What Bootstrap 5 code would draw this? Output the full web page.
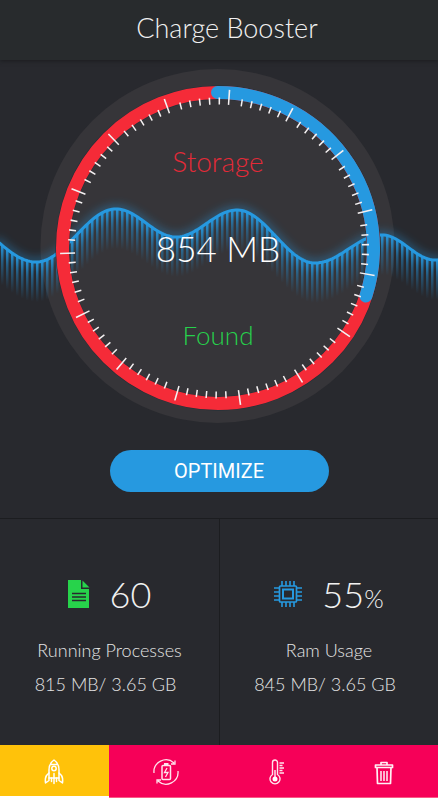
<!DOCTYPE html>
<html lang="en">
<head>
<meta charset="utf-8">
<meta name="viewport" content="width=device-width, initial-scale=1">
<title>Charge Booster</title>
<link rel="stylesheet" href="https://cdn.jsdelivr.net/npm/bootstrap@5.3.0/dist/css/bootstrap.min.css">
<style>
  body { background: #fff; font-family: Lato, "Open Sans", sans-serif; font-weight: 300; }
  .app { max-width: 600px; background: #28292e; color: #f1f1f1; }
  .topbar { background: #282b2d; height: 60px; box-shadow: 0 1px 4px #1b1c1f; }
  .topbar h1 { font-size: 27px; line-height: 36px; font-weight: 300; }
  .gauge text { text-anchor: middle; font-weight: 300; }
  .action { padding: 10px 0 26px; }
  .optimize { background: #2699e0; color: #fff; height: 42px; font: 400 20px/24px Roboto, sans-serif; }
  .optimize:hover { background: #1f88c9; color: #fff; }
  .stats { border-top: 1px solid #1c1d20; }
  .stat { padding: 53px 0 44px; }
  .stat + .stat { border-left: 1px solid #1c1d20; }
  .figure-row { gap: 20px; height: 44px; margin-bottom: 17px; }
  .amount { font-size: 36px; line-height: 44px; }
  .amount small { font-size: 25px; line-height: 1; }
  .stat p { font-size: 18px; line-height: 34px; color: #e4e4e4; }
  .stat p.used { padding-right: 8px; }
  .tabs { align-items: flex-start; }
  .tab { height: 53px; background: #f60058; border-radius: 0; border: 0; border-bottom: 1px solid #f95a86; padding: 2px 0 0; }
  .tab:hover { background: #e30051; }
  .tab.current, .tab.current:hover { background: #ffc20a; border-bottom: 2px solid #fff; }
</style>
<script src="https://cdn.jsdelivr.net/npm/bootstrap@5.3.0/dist/js/bootstrap.bundle.min.js"></script>
</head>
<body>
<div class="app mx-auto">
  <header class="topbar d-flex align-items-center justify-content-center position-relative">
    <h1 class="m-0 ps-3 pb-1">Charge Booster</h1>
  </header>

  <main>
    <svg class="gauge d-block w-100" viewBox="0 60 438 380" role="img" aria-label="854 MB of storage found">
      <defs>
        <linearGradient id="fade" x1="0" y1="0" x2="0" y2="1">
          <stop offset="0" stop-color="#2699e0" stop-opacity=".95"/>
          <stop offset=".45" stop-color="#2386c4" stop-opacity=".5"/>
          <stop offset="1" stop-color="#2386c4" stop-opacity="0"/>
        </linearGradient>
        <filter id="glow" x="-10%" y="-60%" width="120%" height="220%"><feGaussianBlur stdDeviation="5"/></filter>
      </defs>
      <circle cx="217.5" cy="246" r="177" fill="#363539"/>
      <path id="halo" fill="none" stroke="#2699e0" stroke-width="7" opacity=".45" filter="url(#glow)"/>
      <g id="bars" fill="url(#fade)"></g>
      <path id="wave" fill="none" stroke="#2699e0" stroke-width="3"/>
      <circle cx="218" cy="248" r="155.5" fill="none" stroke="#1d3038" stroke-width="14"/>
      <circle cx="218" cy="248" r="155.5" fill="none" stroke="#f52b38" stroke-width="13"/>
      <path d="M217.500 92.500A155.500 155.500 0 0 1 365.900 296" fill="none" stroke="#2699e0" stroke-width="13" stroke-linecap="round"/>
      <g fill="none" stroke="#f4f0f1">
        <circle cx="218.500" cy="248" r="151" stroke-width="15" pathLength="360" stroke-dasharray=".6 23.4" transform="rotate(-86.300 218.500 248)"/>
        <circle cx="218.500" cy="248" r="147" stroke-width="7" pathLength="360" stroke-dasharray=".6 3.2 .6 3.2 .6 3.2 .6 3.2 .6 8.2" transform="rotate(-81.200 218.500 248)"/>
      </g>
      <text x="218" y="172" font-size="28" fill="#e42a38">Storage</text>
      <text x="218" y="262" font-size="35" fill="#fff">854 MB</text>
      <text x="218" y="345" font-size="26" fill="#27d04c">Found</text>
    </svg>

    <div class="action d-flex justify-content-center">
      <button type="button" class="optimize btn rounded-pill w-50 border-0 p-0">OPTIMIZE</button>
    </div>

    <section class="stats row g-0 text-center">
      <div class="stat col-6">
        <div class="figure-row d-flex align-items-center justify-content-center">
          <svg width="22" height="28" viewBox="0 0 22 28" aria-hidden="true">
            <path fill="#27d34b" d="M0 0H13V9H21V28H0ZM14.500 0.500L21.500 7.500H14.500Z"/>
            <path stroke="#28292e" stroke-width="1.400" d="M4 13.500H18M4 17H18M4 20.500H18"/>
          </svg>
          <span class="amount">60</span>
        </div>
        <p class="m-0">Running Processes</p>
        <p class="used m-0">815 MB/ 3.65 GB</p>
      </div>
      <div class="stat col-6">
        <div class="figure-row d-flex align-items-center justify-content-center">
          <svg width="28" height="28" viewBox="0 0 28 28" fill="none" stroke="#2699e0" aria-hidden="true">
            <rect x="5.500" y="6" width="17" height="16" rx="1" stroke-width="1.700"/>
            <rect x="9" y="9.500" width="10" height="9" stroke-width="2"/>
            <path stroke-width="1.600" d="M8 6V1M12 6V1M16 6V1M20 6V1M8 27V22M12 27V22M16 27V22M20 27V22M0 8H5.500M0 12H5.500M0 16H5.500M0 20H5.500M22.500 8H28M22.500 12H28M22.500 16H28M22.500 20H28"/>
          </svg>
          <span class="amount">55<small>%</small></span>
        </div>
        <p class="m-0">Ram Usage</p>
        <p class="used m-0">845 MB/ 3.65 GB</p>
      </div>
    </section>
  </main>

  <nav class="tabs d-flex" aria-label="Tools">
    <button type="button" class="tab current btn flex-fill" aria-label="Boost">
      <svg width="20" height="26" viewBox="0 0 20 26" fill="none" stroke="#fff" stroke-width="1.500" stroke-linejoin="round" stroke-linecap="round">
        <path d="M10 1C6.500 3.500 5 7 5 11V19H15V11C15 7 13.500 3.500 10 1Z"/>
        <path d="M7 5.500H13"/>
        <circle cx="10" cy="9.500" r="2.200"/>
        <path d="M5 14L2.500 16.500C1.500 18 1 20 1.500 24L5 21.500V19M15 14L17.500 16.500C18.500 18 19 20 18.500 24L15 21.500V19M10 14.500V24.500M7.500 19V22.500M12.500 19V22.500"/>
      </svg>
    </button>
    <button type="button" class="tab btn flex-fill" aria-label="Battery">
      <svg width="26" height="26" viewBox="0 0 26 26" fill="none" stroke="#ffe3ec" stroke-width="1.300">
        <path d="M1 14A12 12 0 0 1 21 4M22 1.500V5H18M25 12A12 12 0 0 1 5 22M4 24.500V21H8"/>
        <rect x="9" y="6.500" width="8.500" height="14" rx="1" stroke-width="1.500"/>
        <path d="M11 5H15.500" stroke-width="2"/>
        <path d="M14 9L11.500 13.500H15L12.500 18"/>
      </svg>
    </button>
    <button type="button" class="tab btn flex-fill" aria-label="Temperature">
      <svg width="18" height="26" viewBox="0 0 18 26" fill="none" stroke="#ffe3ec" stroke-width="1.400">
        <path d="M5.500 15.500V3.500A2.500 2.500 0 0 1 10.500 3.500V15.500A5 5 0 1 1 5.500 15.500Z"/>
        <path d="M8 11V19" stroke-width="1.500"/>
        <circle cx="8" cy="20" r="2.500" fill="#fff" stroke="none"/>
        <path d="M12.500 4H17M12.500 6.500H15.500M12.500 9H17M12.500 11.500H15.500M12.500 14H17"/>
      </svg>
    </button>
    <button type="button" class="tab btn flex-fill" aria-label="Clean">
      <svg width="20" height="24" viewBox="0 0 20 24" fill="none" stroke="#fff0f4" stroke-width="1.700" stroke-linejoin="round">
        <path d="M1.500 4H18.500V6.500H1.500ZM7 4V1.500H13V4M3 6.500L3.500 22.500H16.500L17 6.500"/>
        <path d="M7 10V20M10 10V20M13 10V20" stroke-width="1.500"/>
      </svg>
    </button>
  </nav>
</div>

<script>
  // Crests and troughs of the wave, joined by half cosines.
  const turns = [[-42, 220], [36, 262], [116, 209], [176, 237], [237, 210], [315, 263], [382, 235], [435, 260], [500, 225]];
  const waveY = x => {
    const i = turns.findIndex(p => p[0] > x);
    const [x0, y0] = turns[i - 1], [x1, y1] = turns[i];
    return y0 + (y1 - y0) * (1 - Math.cos(Math.PI * (x - x0) / (x1 - x0))) / 2;
  };
  let d = '', bars = '';
  for (let x = -4; x <= 442; x += 2) d += (d ? 'L' : 'M') + x + ' ' + waveY(x).toFixed(1);
  for (let x = 1; x < 438; x += 5) bars += `<rect x="${x}" y="${waveY(x + 1).toFixed(1)}" width="2.500" height="40"/>`;
  document.getElementById('wave').setAttribute('d', d);
  document.getElementById('halo').setAttribute('d', d);
  document.getElementById('bars').innerHTML = bars;
</script>
</body>
</html>
